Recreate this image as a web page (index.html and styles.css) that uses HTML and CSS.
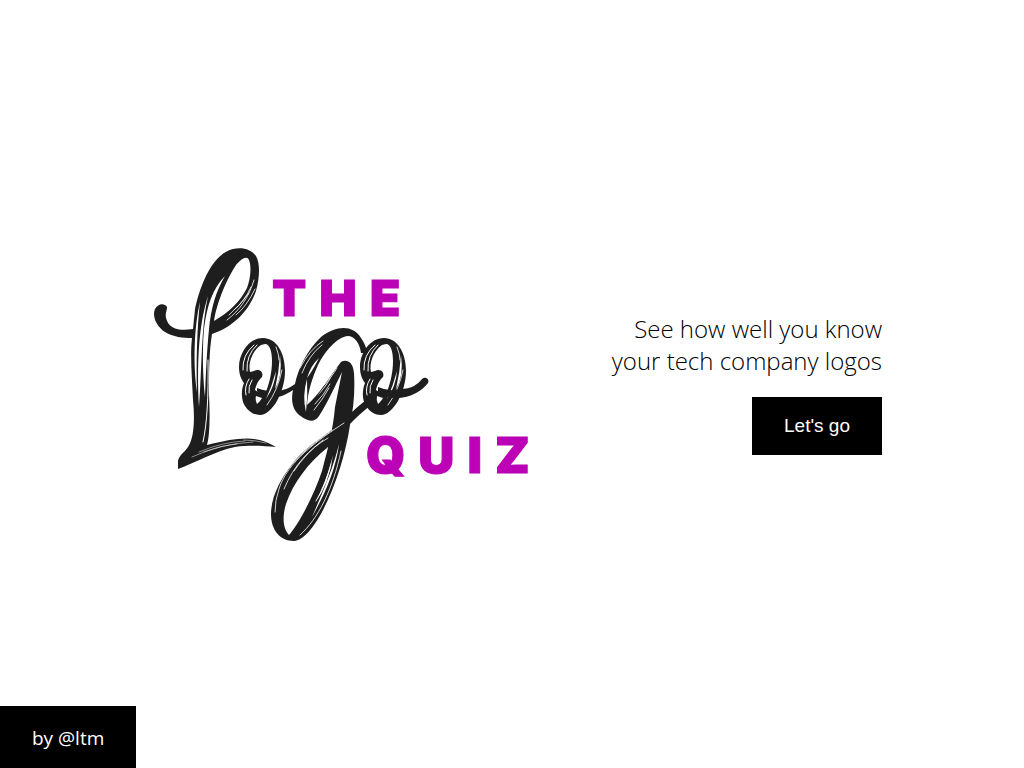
FILE: index.html
```html
<!DOCTYPE html>
<html lang="en">
<head>
<meta charset="utf-8">
<meta name="viewport" content="width=device-width, initial-scale=1">
<title>The Logo Quiz</title>
<link rel="stylesheet" href="styles.css">
</head>
<body>
<main class="intro">
  <svg class="logo" viewBox="142 179 410 410" role="img" aria-label="The Logo Quiz">
    <defs>
      <g id="ring">
        <path class="ink" fill-rule="evenodd" d="M263 338C249 338 239 353 239 367C239 374 241 379 244 383C241 390 241 400 245 406C249 412 254 415 260 415C272 415 285 392 285 371C285 352 276 338 263 338ZM265 344C270 344 272 352 272 361C272 373 269 385 265 394C261 394 258 392 255 390C256 386 257 382 262 377C264 372 259 368 254 371L250 372C248 364 252 351 261 345ZM256 396L262 398C261 400 258 403 257 404Q255 400 256 396Z"/>
        <path class="streak" d="M254 345Q242 355 243 370M257 345Q246 355 247 371M249 379Q244 387 246 395M252 380Q248 386 249 393"/>
        <path class="paper" d="M280 355Q283 376 275 389Q279 372 280 355ZM276 371Q275 386 266 399Q272 386 276 371Z"/>
        <path class="streak fine" d="M282 370Q278 390 267 405M276 347Q279 354 279 360"/>
      </g>
    </defs>
    <path class="ink" fill-rule="evenodd" d="M167 307C165 303 158 303 155 309C152 316 156 326 165 332C173 337 183 338 192 338C190 355 192 378 193 400C195 420 194 438 188 447C184 453 179 455 178 461L178 469C195 463 215 451 235 447C250 445 263 446 276 447C265 440 252 437 238 439C226 440 216 443 207 445C210 435 210 413 209 395C209 373 209 352 212 334C233 327 249 311 256 291C260 276 260 263 256 256C251 249 242 247 233 249C212 254 200 286 195 309L193 329C181 331 169 330 166 318C165 313 167 311 167 307ZM214 321C217 301 228 277 236 265C241 259 247 255 249 260C252 268 250 280 247 288C240 302 228 313 214 321Z"/>
    <path class="paper" d="M208 296C198 327 197 367 199 407C202 367 201 327 208 296ZM200 302C194 327 193 365 197 392C196 365 197 327 200 302Z"/>
    <path class="paper" d="M225 276C213 288 207 305 204 329C202 351 203 380 205 397C206 370 207 350 209 329C211 308 216 291 225 276Z"/>
    <path class="streak" d="M208 360Q209 415 203 442"/>
    <path class="streak fine" d="M254 280C249 297 240 310 227 320M251 287Q244 302 234 310M255 289Q247 306 236 315M249 293Q241 304 229 315"/>
    <path class="streak faint" d="M192 457Q219 444 253 442M199 452Q222 442 245 441M204 452Q223 445 237 444M244 440Q255 440 266 443"/>

    <path class="ink" d="M361 353C360 343 354 336 348 336C337 337 325 351 318 365C312 378 308 392 307 405C319 395 330 376 341 362C346 359 353 361 354 373C355 390 354 406 350 425C346 452 336 486 322 512C314 527 303 541 294 541C280 541 271 530 271 514C271 496 282 475 298 457C312 443 327 434 338 425C349 415 357 407 366 400L371 405C363 411 356 418 350 424C342 431 333 441 327 448C309 462 293 483 286 504C282 517 283 529 289 535C299 524 314 495 322 471C328 448 333 430 335 407L342 372C335 386 327 404 319 416C313 425 304 419 298 414C292 408 291 399 293 390C286 395 278 398 269 398C264 397 260 395 257 391L257 388C273 394 286 391 295 384C298 369 307 350 321 337C337 325 353 325 361 338C365 344 367 348 366 353Z"/>
    <path class="paper" d="M307 379Q302 396 306 412Q308 396 307 379ZM319 358Q311 365 307 378Q313 370 319 358ZM334 372Q326 388 317 396Q324 388 334 372Z"/>
    <path class="streak fine" d="M300 368Q310 349 323 341M302 373Q309 355 322 345M321 388Q332 377 337 368M314 410Q323 399 329 388M315 404Q323 396 330 384"/>
    <path class="streak fine" d="M344 423C318 440 287 462 279 489Q275 500 275 512M332 430C309 446 289 463 279 483M328 438C309 449 294 465 284 489M323 440Q306 453 294 471"/>
    <path class="paper" d="M339 444C336 469 325 494 312 517C322 494 333 469 339 444ZM333 455Q329 484 315 503Q326 483 333 455Z"/>
    <path class="streak fine" d="M341 451C333 489 318 519 300 535M331 464Q326 484 316 501"/>

    <use href="#ring"/>
    <use href="#ring" x="121"/>
    <path class="ink" d="M378 387Q389 392 400 389C412 389 418 384 422 379C425 376 430 379 428 383C422 391 410 399 393 398Q384 396 378 392Z"/>
    <text class="word" x="272" y="316">THE</text>
    <text class="word" x="366" y="473">QUIZ</text>
  </svg>
  <section class="start">
    <p class="lead">See how well you know<br>your tech company logos</p>
    <button class="go" type="button">Let's go</button>
  </section>
</main>
<footer class="credit">by @ltm</footer>
</body>
</html>
```
FILE: styles.css
```css
* {
  box-sizing: border-box;
}

body {
  margin: 0;
  min-height: 100vh;
  display: flex;
  background: #fff;
  color: #000;
  font-family: "Open Sans", "Noto Sans", sans-serif;
}

.intro {
  width: 100%;
  max-width: 740px;
  margin: auto;
  display: flex;
  flex-wrap: wrap;
  align-items: center;
  justify-content: space-between;
}

.logo {
  width: 410px;
  max-width: 100%;
}

.ink {
  fill: #1e1e1e;
}

.paper {
  fill: #fff;
}

.streak {
  fill: none;
  stroke: #fff;
  stroke-width: 1;
  stroke-linecap: round;
}

.streak.fine {
  opacity: 0.8;
}

.streak.faint {
  opacity: 0.5;
}

.word {
  fill: #bb00b5;
  stroke: #bb00b5;
  stroke-width: 1;
  font-family: Inter, sans-serif;
  font-size: 50px;
  font-weight: 900;
  letter-spacing: 13px;
}

.start {
  text-align: right;
}

.lead {
  margin: 0 0 20px;
  font-size: 24px;
  font-weight: 300;
  line-height: 32px;
}

.go {
  padding: 18px 32px;
  border: 0;
  background: #000;
  color: #fff;
  font-family: "Liberation Sans", Arial, sans-serif;
  font-size: 19px;
  line-height: 22px;
}

.credit {
  position: fixed;
  left: 0;
  bottom: 0;
  padding: 19px 32px 17px;
  background: #000;
  color: #fff;
  font-size: 19px;
  line-height: 26px;
}
```
